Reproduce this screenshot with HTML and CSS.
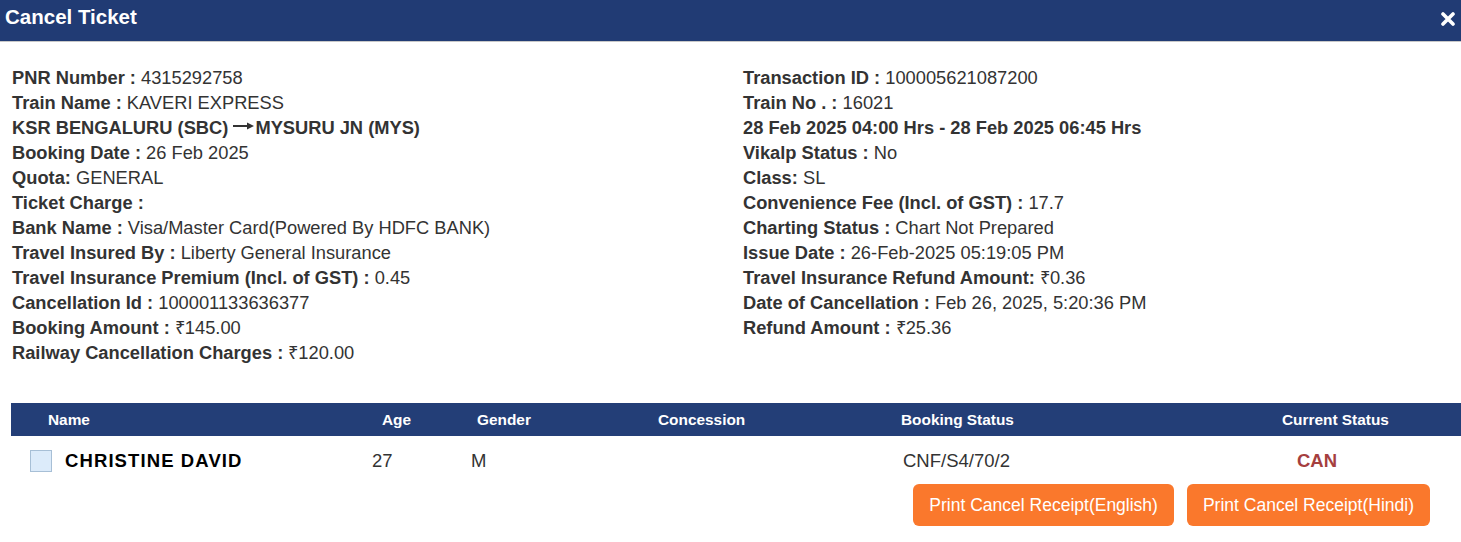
FILE: index.html
```html
<!DOCTYPE html>
<html lang="en">
<head>
    <meta charset="UTF-8">
    <meta name="viewport" content="width=device-width, initial-scale=1.0">
    <title>Cancel Ticket</title>
    <link rel="stylesheet" href="styles.css">
</head>
<body>
    <div class="modal">
        <div class="modal-header">
            <h1 class="modal-title">Cancel Ticket</h1>
            <button class="close-btn" type="button" aria-label="Close">
                <svg width="14" height="14" viewBox="0 0 14 14">
                    <path d="M2 2 L12 12 M12 2 L2 12" stroke="#fff" stroke-width="3.6" stroke-linecap="round"/>
                </svg>
            </button>
        </div>

        <div class="details">
            <div class="details-col">
                <div class="row"><b>PNR Number :</b> 4315292758</div>
                <div class="row"><b>Train Name :</b> KAVERI EXPRESS</div>
                <div class="row"><b>KSR BENGALURU (SBC) <svg class="route-arrow" width="21" height="8" viewBox="0 0 21 8"><path d="M0 4 H15" stroke="#333" stroke-width="2"/><path d="M14 0.5 L21 4 L14 7.5 Z" fill="#333"/></svg>MYSURU JN (MYS)</b></div>
                <div class="row"><b>Booking Date :</b> 26 Feb 2025</div>
                <div class="row"><b>Quota:</b> GENERAL</div>
                <div class="row"><b>Ticket Charge :</b></div>
                <div class="row"><b>Bank Name :</b> Visa/Master Card(Powered By HDFC BANK)</div>
                <div class="row"><b>Travel Insured By :</b> Liberty General Insurance</div>
                <div class="row"><b>Travel Insurance Premium (Incl. of GST) :</b> 0.45</div>
                <div class="row"><b>Cancellation Id :</b> 100001133636377</div>
                <div class="row"><b>Booking Amount :</b> &#8377;145.00</div>
                <div class="row"><b>Railway Cancellation Charges :</b> &#8377;120.00</div>
            </div>
            <div class="details-col">
                <div class="row"><b>Transaction ID :</b> 100005621087200</div>
                <div class="row"><b>Train No . :</b> 16021</div>
                <div class="row"><b>28 Feb 2025 04:00 Hrs - 28 Feb 2025 06:45 Hrs</b></div>
                <div class="row"><b>Vikalp Status :</b> No</div>
                <div class="row"><b>Class:</b> SL</div>
                <div class="row"><b>Convenience Fee (Incl. of GST) :</b> 17.7</div>
                <div class="row"><b>Charting Status :</b> Chart Not Prepared</div>
                <div class="row"><b>Issue Date :</b> 26-Feb-2025 05:19:05 PM</div>
                <div class="row"><b>Travel Insurance Refund Amount:</b> &#8377;0.36</div>
                <div class="row"><b>Date of Cancellation :</b> Feb 26, 2025, 5:20:36 PM</div>
                <div class="row"><b>Refund Amount :</b> &#8377;25.36</div>
            </div>
        </div>

        <div class="passengers">
            <div class="pax-head">
                <div class="th th-name">Name</div>
                <div class="th th-age">Age</div>
                <div class="th th-gender">Gender</div>
                <div class="th th-conc">Concession</div>
                <div class="th th-booking">Booking Status</div>
                <div class="th th-current">Current Status</div>
            </div>
            <div class="pax-row">
                <div class="td td-name">
                    <span class="checkbox"></span>
                    <span class="pax-name">CHRISTINE DAVID</span>
                </div>
                <div class="td td-age">27</div>
                <div class="td td-gender">M</div>
                <div class="td td-conc"></div>
                <div class="td td-booking">CNF/S4/70/2</div>
                <div class="td td-current">CAN</div>
            </div>
        </div>

        <div class="actions">
            <button class="print-btn" type="button">Print Cancel Receipt(English)</button>
            <button class="print-btn" type="button">Print Cancel Receipt(Hindi)</button>
        </div>
    </div>
</body>
</html>
```

FILE: styles.css
```css
* {
    margin: 0;
    padding: 0;
    box-sizing: border-box;
}

body {
    font-family: "Liberation Sans", Arial, sans-serif;
    background: #ffffff;
    color: #333333;
}

.modal {
    width: 100%;
}

.modal-header {
    height: 42px;
    background: #213b74;
    border-bottom: 1px solid #c8c8c8;
    display: flex;
    align-items: center;
    justify-content: space-between;
    padding: 0 6px 7px 5px;
}

.modal-title {
    color: #ffffff;
    font-size: 20.5px;
    font-weight: 700;
}

.close-btn {
    background: none;
    border: none;
    cursor: pointer;
    display: flex;
    margin-top: 4px;
}

.details {
    display: grid;
    grid-template-columns: 731px 1fr;
    padding: 23px 0 0 12px;
}

.row {
    font-size: 18.3px;
    line-height: 25px;
    white-space: nowrap;
}

.row b {
    font-weight: 700;
}

.route-arrow {
    vertical-align: 4px;
    margin-right: 1px;
}

.passengers {
    margin: 38px 0 0 11px;
}

.pax-head,
.pax-row {
    display: grid;
    grid-template-columns: 361px 99px 181px 248px 380px 1fr;
}

.pax-head {
    background: #233e77;
    height: 33px;
    align-items: center;
}

.th {
    color: #ffffff;
    font-weight: 700;
    font-size: 15.4px;
}

.th-name { padding-left: 37px; }
.th-age { padding-left: 10px; }
.th-gender { padding-left: 6px; }
.th-conc { padding-left: 6px; }
.th-booking { padding-left: 1px; }
.th-current { padding-left: 2px; }

.pax-row {
    align-items: center;
    padding-top: 14px;
}

.td {
    font-size: 18.5px;
    color: #333333;
}

.td-name {
    display: flex;
    align-items: center;
    padding-left: 19px;
}

.checkbox {
    width: 22px;
    height: 22px;
    background: #dcebfa;
    border: 1px solid #a7bfd6;
    margin-right: 13px;
}

.pax-name {
    font-size: 18.5px;
    font-weight: 700;
    letter-spacing: 1.1px;
    color: #000000;
}

.td-booking { padding-left: 3px; }

.td-current {
    padding-left: 17px;
    font-weight: 700;
    color: #a53f3f;
}

.actions {
    display: flex;
    justify-content: flex-end;
    gap: 13px;
    padding: 12px 31px 0 0;
}

.print-btn {
    background: #fa782c;
    color: #ffffff;
    border: none;
    border-radius: 6px;
    height: 42px;
    padding: 0 16px;
    font-family: "Liberation Sans", Arial, sans-serif;
    font-size: 17.5px;
    cursor: pointer;
}
```
